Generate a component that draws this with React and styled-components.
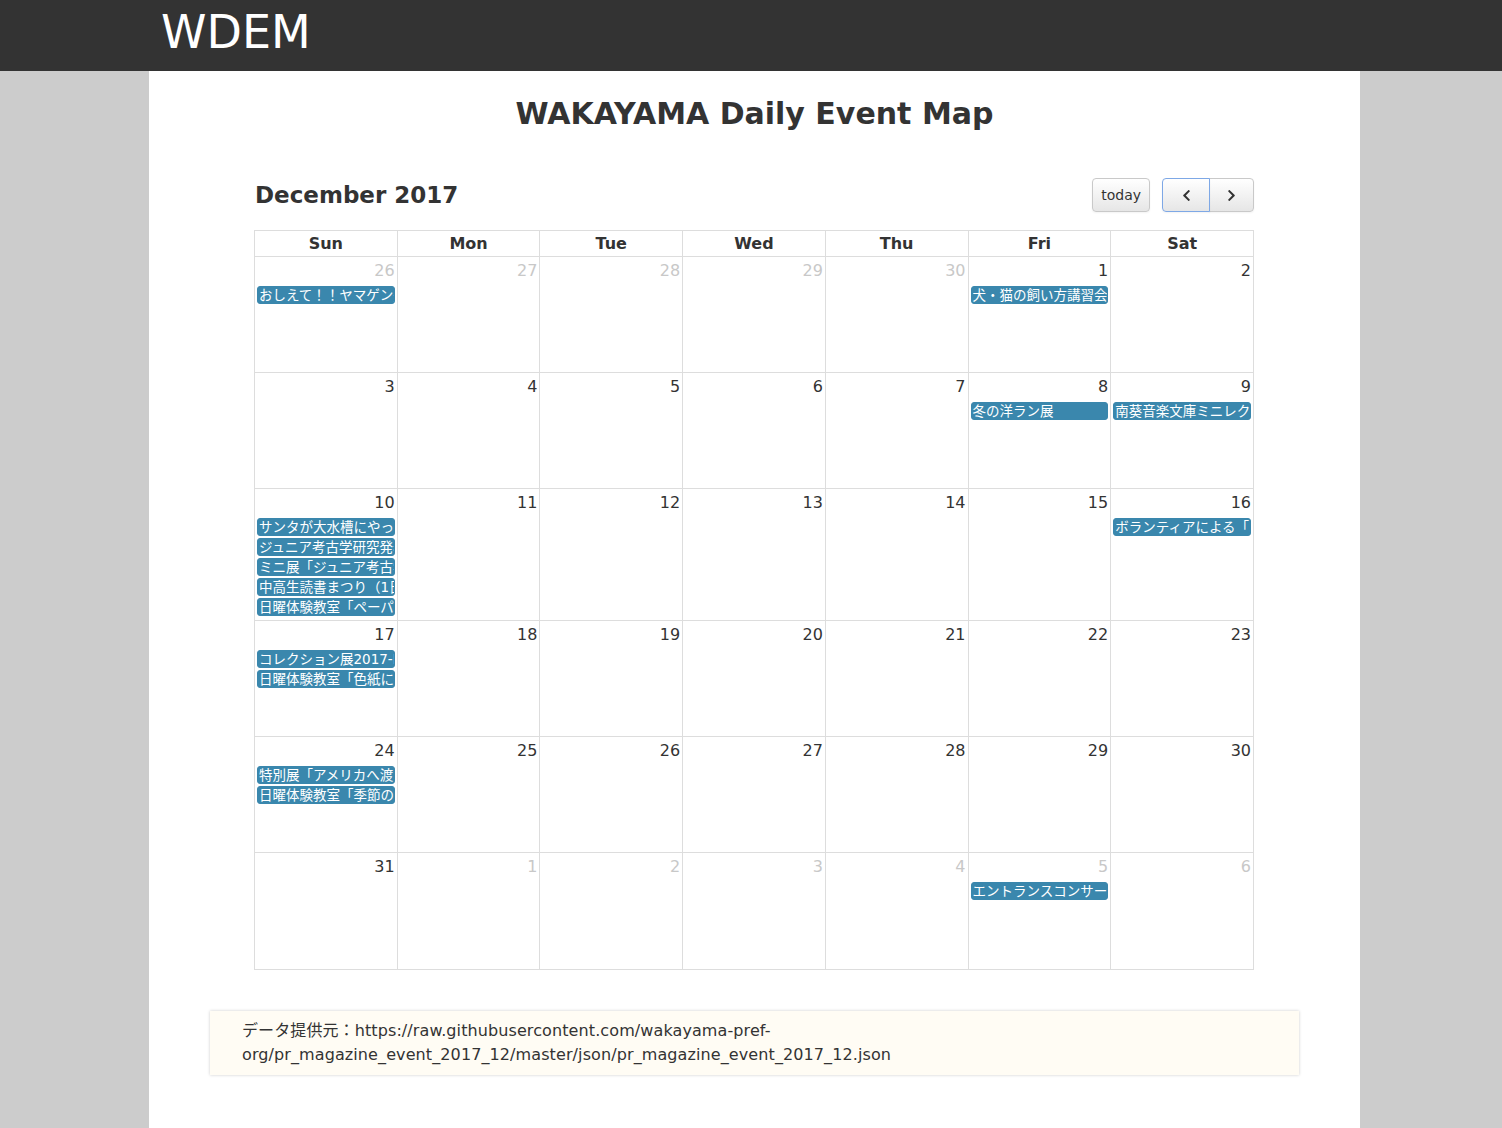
import React from "react";
import styled, { createGlobalStyle } from "styled-components";
import { FaChevronLeft, FaChevronRight } from "react-icons/fa";

const Global = createGlobalStyle`
  html, body {
    margin: 0;
    padding: 0;
    background: #cccccc;
    font-family: "DejaVu Sans", "Noto Sans CJK JP", sans-serif;
    color: #333;
  }
`;

const TopBar = styled.header`
  height: 71px;
  background: #333333;
`;

const Brand = styled.div`
  margin-left: 161px;
  color: #fff;
  font-size: 46px;
  line-height: 64px;
`;

const Page = styled.main`
  width: 1211px;
  margin-left: 149px;
  min-height: 1057px;
  background: #fff;
  padding-top: 20px;
  box-sizing: border-box;
`;

const Title = styled.h1`
  margin: 0;
  text-align: center;
  font-size: 30px;
  font-weight: bold;
  line-height: 46px;
`;

const Calendar = styled.section`
  width: 1000px;
  margin: 41px 0 0 105px;
`;

const Toolbar = styled.div`
  display: flex;
  justify-content: space-between;
  align-items: center;
  height: 34px;
  margin-bottom: 18px;
  padding-left: 1px;
`;

const MonthTitle = styled.h2`
  margin: 0;
  font-size: 23px;
  font-weight: bold;
`;

const ButtonRow = styled.div`
  display: flex;
  gap: 12px;
`;

const Group = styled.div`
  display: flex;
`;

const Btn = styled.button`
  height: 34px;
  padding: 0 8px;
  font-family: inherit;
  font-size: 14px;
  color: #333;
  background: linear-gradient(#ffffff, #e6e6e6);
  border: 1px solid ${(p) => (p.focus ? "#7ea8e6" : "#c9c9c9")};
  border-radius: ${(p) => p.radius || "4px"};
  box-shadow: inset 0 1px 0 rgba(255,255,255,.2), 0 1px 2px rgba(0,0,0,.05);
  display: flex;
  align-items: center;
  justify-content: center;
  width: ${(p) => p.w || "auto"};
  position: relative;
  z-index: ${(p) => (p.focus ? 1 : 0)};
  margin-left: ${(p) => p.ml || "0"};
`;

const Table = styled.table`
  width: 100%;
  border-collapse: collapse;
  table-layout: fixed;
`;

const Th = styled.th`
  border: 1px solid #ddd;
  height: 25px;
  padding: 0;
  font-size: 16px;
  font-weight: bold;
  text-align: center;
`;

const Td = styled.td`
  border: 1px solid #ddd;
  vertical-align: top;
  padding: 0;
  height: ${(p) => p.h}px;
`;

const DayNum = styled.div`
  text-align: right;
  padding: 3px 2px 0 0;
  font-size: 16px;
  line-height: 22px;
  color: ${(p) => (p.other ? "#c8c8c8" : "#333")};
  margin-bottom: 4px;
`;

const Event = styled.div`
  margin: 0 2px 2px;
  height: 18px;
  line-height: 17px;
  background: #3a87ad;
  border: 1px solid #3a87ad;
  box-sizing: border-box;
  border-radius: 3px;
  color: #fff;
  font-size: 13.5px;
  padding-left: 1px;
  white-space: nowrap;
  overflow: hidden;
`;

const Credit = styled.div`
  width: 1089px;
  margin: 41px auto 0;
  background: #fffcf4;
  box-shadow: 0 0 3px rgba(0, 0, 0, 0.2);
  padding: 8px 32px;
  box-sizing: border-box;
  font-size: 16px;
  line-height: 24px;
  letter-spacing: 0.1px;
`;

const events = {
  "11-26": ["おしえて！！ヤマゲン先生"],
  "12-1": ["犬・猫の飼い方講習会"],
  "12-8": ["冬の洋ラン展"],
  "12-9": ["南葵音楽文庫ミニレクチャー"],
  "12-10": [
    "サンタが大水槽にやってくる",
    "ジュニア考古学研究発表会",
    "ミニ展「ジュニア考古学」",
    "中高生読書まつり（1日目）",
    "日曜体験教室「ペーパークラフト」",
  ],
  "12-16": ["ボランティアによる「おはなし会」"],
  "12-17": ["コレクション展2017-Ⅲ", "日曜体験教室「色紙に描こう」"],
  "12-24": ["特別展「アメリカへ渡った日本人」", "日曜体験教室「季節の工作」"],
  "1-5": ["エントランスコンサート"],
};

const weeks = [
  [[11, 26], [11, 27], [11, 28], [11, 29], [11, 30], [12, 1], [12, 2]],
  [[12, 3], [12, 4], [12, 5], [12, 6], [12, 7], [12, 8], [12, 9]],
  [[12, 10], [12, 11], [12, 12], [12, 13], [12, 14], [12, 15], [12, 16]],
  [[12, 17], [12, 18], [12, 19], [12, 20], [12, 21], [12, 22], [12, 23]],
  [[12, 24], [12, 25], [12, 26], [12, 27], [12, 28], [12, 29], [12, 30]],
  [[12, 31], [1, 1], [1, 2], [1, 3], [1, 4], [1, 5], [1, 6]],
];

const heights = [115, 115, 131, 115, 115, 116];
const days = ["Sun", "Mon", "Tue", "Wed", "Thu", "Fri", "Sat"];

export default function App() {
  return (
    <>
      <Global />
      <TopBar>
        <Brand>WDEM</Brand>
      </TopBar>
      <Page>
        <Title>WAKAYAMA Daily Event Map</Title>
        <Calendar>
          <Toolbar>
            <MonthTitle>December 2017</MonthTitle>
            <ButtonRow>
              <Btn>today</Btn>
              <Group>
                <Btn focus w="48px" radius="4px 0 0 4px">
                  <FaChevronLeft size={13} />
                </Btn>
                <Btn w="45px" radius="0 4px 4px 0" ml="-1px">
                  <FaChevronRight size={13} />
                </Btn>
              </Group>
            </ButtonRow>
          </Toolbar>
          <Table>
            <thead>
              <tr>
                {days.map((d) => (
                  <Th key={d}>{d}</Th>
                ))}
              </tr>
            </thead>
            <tbody>
              {weeks.map((w, i) => (
                <tr key={i}>
                  {w.map(([m, d]) => (
                    <Td key={m + "-" + d} h={heights[i]}>
                      <DayNum other={m !== 12}>{d}</DayNum>
                      {(events[m + "-" + d] || []).map((e) => (
                        <Event key={e}>{e}</Event>
                      ))}
                    </Td>
                  ))}
                </tr>
              ))}
            </tbody>
          </Table>
        </Calendar>
        <Credit>
          データ提供元：https://raw.githubusercontent.com/wakayama-pref-org/pr_magazine_event_2017_12/master/json/pr_magazine_event_2017_12.json
        </Credit>
      </Page>
    </>
  );
}
